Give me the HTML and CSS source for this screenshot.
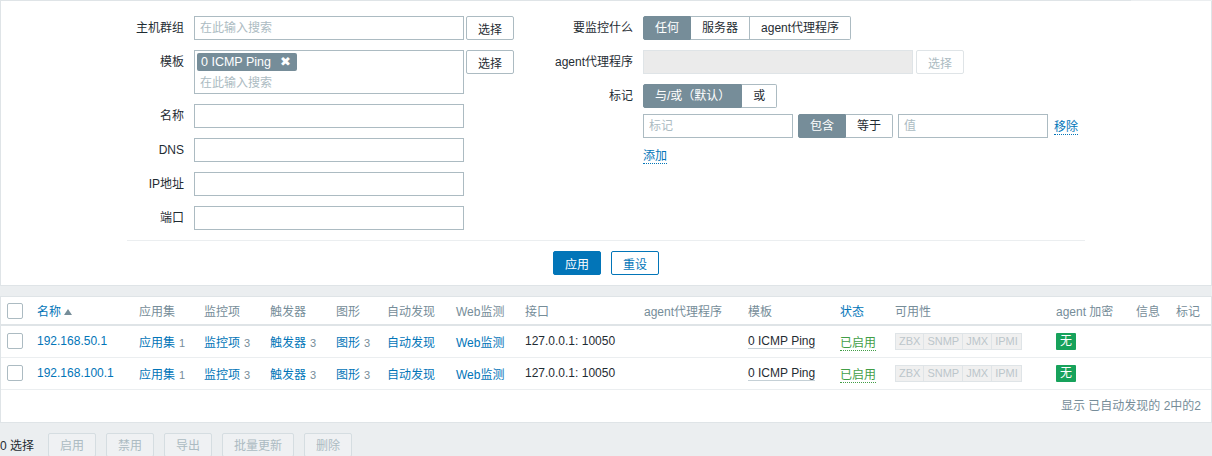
FILE: index.html
```html
<!DOCTYPE html>
<html lang="zh">
<head>
<meta charset="utf-8">
<title>主机</title>
<link rel="stylesheet" href="styles.css">
</head>
<body>
<div class="filter-top"></div>
<section class="filter">
  <div class="filter-cols">
    <div class="col col-left">
      <div class="row">
        <label class="lbl">主机群组</label>
        <div class="ctrl"><input class="inp w270" placeholder="在此输入搜索"><button class="btn-grey">选择</button></div>
      </div>
      <div class="row">
        <label class="lbl">模板</label>
        <div class="ctrl top">
          <div class="multi">
            <span class="chip">0 ICMP Ping<span class="chip-x">✖</span></span>
            <span class="ph">在此输入搜索</span>
          </div>
          <button class="btn-grey">选择</button>
        </div>
      </div>
      <div class="row"><label class="lbl">名称</label><div class="ctrl"><input class="inp w270"></div></div>
      <div class="row"><label class="lbl">DNS</label><div class="ctrl"><input class="inp w270"></div></div>
      <div class="row"><label class="lbl">IP地址</label><div class="ctrl"><input class="inp w270"></div></div>
      <div class="row"><label class="lbl">端口</label><div class="ctrl"><input class="inp w270"></div></div>
    </div>
    <div class="col col-right">
      <div class="row">
        <label class="lbl">要监控什么</label>
        <div class="ctrl">
          <div class="seg"><span class="on">任何</span><span>服务器</span><span>agent代理程序</span></div>
        </div>
      </div>
      <div class="row">
        <label class="lbl">agent代理程序</label>
        <div class="ctrl"><input class="inp w270" disabled><button class="btn-grey" disabled>选择</button></div>
      </div>
      <div class="row">
        <label class="lbl">标记</label>
        <div class="ctrl stack">
          <div class="seg"><span class="on">与/或（默认）</span><span>或</span></div>
          <div class="tag-row">
            <input class="inp w150" placeholder="标记">
            <div class="seg"><span class="on">包含</span><span>等于</span></div>
            <input class="inp w150" placeholder="值">
            <a class="link dotted">移除</a>
          </div>
          <div class="add-row"><a class="link dotted">添加</a></div>
        </div>
      </div>
    </div>
  </div>
  <div class="filter-sep"></div>
  <div class="filter-buttons">
    <button class="btn-apply">应用</button>
    <button class="btn-reset">重设</button>
  </div>
</section>

<section class="list">
  <table class="hosts">
    <colgroup>
      <col style="width:36px"><col style="width:102px"><col style="width:65px"><col style="width:66px">
      <col style="width:66px"><col style="width:51px"><col style="width:69px"><col style="width:69px">
      <col style="width:119px"><col style="width:104px"><col style="width:92px"><col style="width:55px">
      <col style="width:161px"><col style="width:80px"><col style="width:40px"><col style="width:35px">
    </colgroup>
    <thead>
      <tr>
        <th class="cb-cell"><span class="cb"></span></th>
        <th><span class="sort">名称</span><span class="arrow"></span></th>
        <th>应用集</th><th>监控项</th><th>触发器</th><th>图形</th><th>自动发现</th><th>Web监测</th><th>接口</th>
        <th>agent代理程序</th><th>模板</th><th><span class="sort">状态</span></th><th>可用性</th><th>agent 加密</th><th>信息</th><th>标记</th>
      </tr>
    </thead>
    <tbody>
      <tr>
        <td class="cb-cell"><span class="cb"></span></td>
        <td><a class="link">192.168.50.1</a></td>
        <td><a class="link">应用集</a><sup>1</sup></td>
        <td><a class="link">监控项</a><sup>3</sup></td>
        <td><a class="link">触发器</a><sup>3</sup></td>
        <td><a class="link">图形</a><sup>3</sup></td>
        <td><a class="link">自动发现</a></td>
        <td><a class="link">Web监测</a></td>
        <td>127.0.0.1: 10050</td>
        <td></td>
        <td><a class="link-alt">0 ICMP Ping</a></td>
        <td><a class="status-on">已启用</a></td>
        <td><span class="avail"><span>ZBX</span><span>SNMP</span><span>JMX</span><span>IPMI</span></span></td>
        <td><span class="enc">无</span></td>
        <td></td><td></td>
      </tr>
      <tr>
        <td class="cb-cell"><span class="cb"></span></td>
        <td><a class="link">192.168.100.1</a></td>
        <td><a class="link">应用集</a><sup>1</sup></td>
        <td><a class="link">监控项</a><sup>3</sup></td>
        <td><a class="link">触发器</a><sup>3</sup></td>
        <td><a class="link">图形</a><sup>3</sup></td>
        <td><a class="link">自动发现</a></td>
        <td><a class="link">Web监测</a></td>
        <td>127.0.0.1: 10050</td>
        <td></td>
        <td><a class="link-alt">0 ICMP Ping</a></td>
        <td><a class="status-on">已启用</a></td>
        <td><span class="avail"><span>ZBX</span><span>SNMP</span><span>JMX</span><span>IPMI</span></span></td>
        <td><span class="enc">无</span></td>
        <td></td><td></td>
      </tr>
    </tbody>
  </table>
  <div class="paging">显示 已自动发现的 2中的2</div>
</section>

<div class="actions">
  <span class="sel-count">0 选择</span>
  <button class="btn-dis" disabled>启用</button>
  <button class="btn-dis" disabled>禁用</button>
  <button class="btn-dis" disabled>导出</button>
  <button class="btn-dis" disabled>批量更新</button>
  <button class="btn-dis" disabled>删除</button>
</div>
</body>
</html>
```
FILE: styles.css
```css
* { box-sizing: border-box; }
html, body { margin: 0; padding: 0; }
body {
  background: #ebeef0;
  font-family: "Liberation Sans", "Noto Sans CJK SC", Arial, sans-serif;
  font-size: 12px;
  color: #1f2c33;
  width: 1212px;
  height: 456px;
  overflow: hidden;
}
input, button { font: inherit; }

.filter-top { height: 1px; width: 1131px; background: #dfe4e7; }
.filter {
  background: #fff;
  border: 1px solid #dfe4e7;
  border-top: none;
  padding-top: 15px;
}
.filter-cols { display: flex; }
.col { display: flex; flex-direction: column; gap: 10px; }
.col-left { width: 519px; }
.col-left .row { display: grid; grid-template-columns: 183px auto; column-gap: 10px; }
.col-right .row { display: grid; grid-template-columns: 113px auto; column-gap: 10px; }
.lbl { text-align: right; line-height: 24px; white-space: nowrap; }
.ctrl { display: flex; align-items: center; }
.ctrl.top { align-items: flex-start; }
.ctrl.stack { flex-direction: column; align-items: flex-start; }

.inp {
  height: 24px;
  border: 1px solid #acbbc2;
  background: #fff;
  padding: 0 5px;
  color: #1f2c33;
  outline: none;
}
.inp::placeholder { color: #acbbc2; }
.inp:disabled { background: #ebebeb; border-color: #dfe4e7; }
.w270 { width: 270px; }
.w150 { width: 150px; }

.btn-grey {
  height: 24px;
  width: 48px;
  margin-left: 2px;
  border: 1px solid #acbbc2;
  background: #fff;
  color: #1f2c33;
  padding: 0;
  border-radius: 2px;
}
.btn-grey:disabled { color: #acbbc2; border-color: #dfe4e7; background: #fff; margin-left: 3px; }

.multi {
  width: 270px;
  height: 44px;
  border: 1px solid #acbbc2;
  padding: 2px 2px;
  display: flex;
  flex-direction: column;
  align-items: flex-start;
}
.chip {
  background: #768d99;
  color: #fff;
  height: 18px;
  line-height: 18px;
  padding: 0 6px 0 4px;
  border-radius: 2px;
  display: inline-flex;
  align-items: center;
  font-size: 12.5px;
}
.chip-x { margin-left: 9px; font-size: 13px; font-family: "DejaVu Sans", sans-serif; }
.ph { color: #acbbc2; line-height: 20px; padding-left: 3px; margin-top: 2px; }

.seg { display: inline-flex; height: 24px; }
.seg span {
  border: 1px solid #acbbc2;
  border-left: none;
  padding: 0 11px;
  line-height: 22px;
  background: #fff;
  white-space: nowrap;
}
.seg span:first-child { border-left: 1px solid #acbbc2; border-radius: 2px 0 0 2px; }
.seg span:last-child { border-radius: 0 2px 2px 0; }
.seg span.on { background: #768d99; border-color: #768d99; color: #fff; }

.tag-row { display: flex; align-items: center; gap: 5px; margin-top: 6px; }
.tag-row .link { margin-left: 1px; }
.add-row { margin-top: 8px; }

.link { color: #0275b8; text-decoration: none; }
.dotted { border-bottom: 1px dotted #0275b8; }

.filter-sep { margin: 10px 126px 0; border-top: 1px solid #ebeef0; }
.filter-buttons { display: flex; justify-content: center; gap: 10px; padding: 10px 0; }
.btn-apply, .btn-reset {
  width: 48px;
  height: 24px;
  border-radius: 2px;
  padding: 0;
}
.btn-apply { background: #0275b8; border: 1px solid #0275b8; color: #fff; }
.btn-reset { background: #fff; border: 1px solid #0275b8; color: #0275b8; }

.list {
  margin-top: 10px;
  background: #fff;
  border: 1px solid #dfe4e7;
}
.hosts { border-collapse: collapse; table-layout: fixed; width: 1210px; }
.hosts th {
  height: 28px;
  text-align: left;
  font-weight: normal;
  color: #768d99;
  border-bottom: 2px solid #dfe4e7;
  padding: 0;
  white-space: nowrap;
  vertical-align: middle;
}
.hosts th .sort { color: #0275b8; }
.arrow {
  display: inline-block;
  margin-left: 3px;
  width: 0; height: 0;
  border-left: 4px solid transparent;
  border-right: 4px solid transparent;
  border-bottom: 6px solid #768d99;
  vertical-align: 1px;
}
.hosts td {
  height: 32px;
  padding: 0;
  border-bottom: 1px solid #ebeef0;
  white-space: nowrap;
  vertical-align: middle;
}
.cb-cell { padding-left: 6px !important; }
.cb {
  display: block;
  width: 16px;
  height: 16px;
  border: 1px solid #acbbc2;
  border-radius: 2px;
  background: #fff;
}
sup { vertical-align: baseline; font-size: 11px; color: #768d99; margin-left: 4px; }
.link-alt { color: #1f2c33; border-bottom: 1px solid #c5d0d6; }
.status-on { color: #429e47; border-bottom: 1px dotted #429e47; }
.avail { display: inline-flex; vertical-align: middle; }
.avail span {
  border: 1px solid #dfe4e7;
  border-left: none;
  background: #f0f0f0;
  color: #bcc6cb;
  font-size: 11px;
  height: 17px;
  line-height: 15px;
  padding: 0 3px;
}
.avail span:first-child { border-left: 1px solid #dfe4e7; }
.enc {
  display: inline-block;
  background: #17a25b;
  color: #fff;
  height: 17px;
  line-height: 17px;
  padding: 0 4px;
  border-radius: 1px;
  vertical-align: middle;
}
.paging {
  height: 32px;
  line-height: 32px;
  text-align: right;
  padding-right: 10px;
  color: #768d99;
}

.actions { display: flex; align-items: center; margin-top: 10px; height: 24px; }
.sel-count { margin-right: 14px; }
.btn-dis {
  height: 24px;
  padding: 0 11px;
  min-width: 48px;
  margin-right: 10px;
  border: 1px solid #d5dde1;
  background: #eff1f3;
  color: #acbbc2;
  border-radius: 2px;
}
```
